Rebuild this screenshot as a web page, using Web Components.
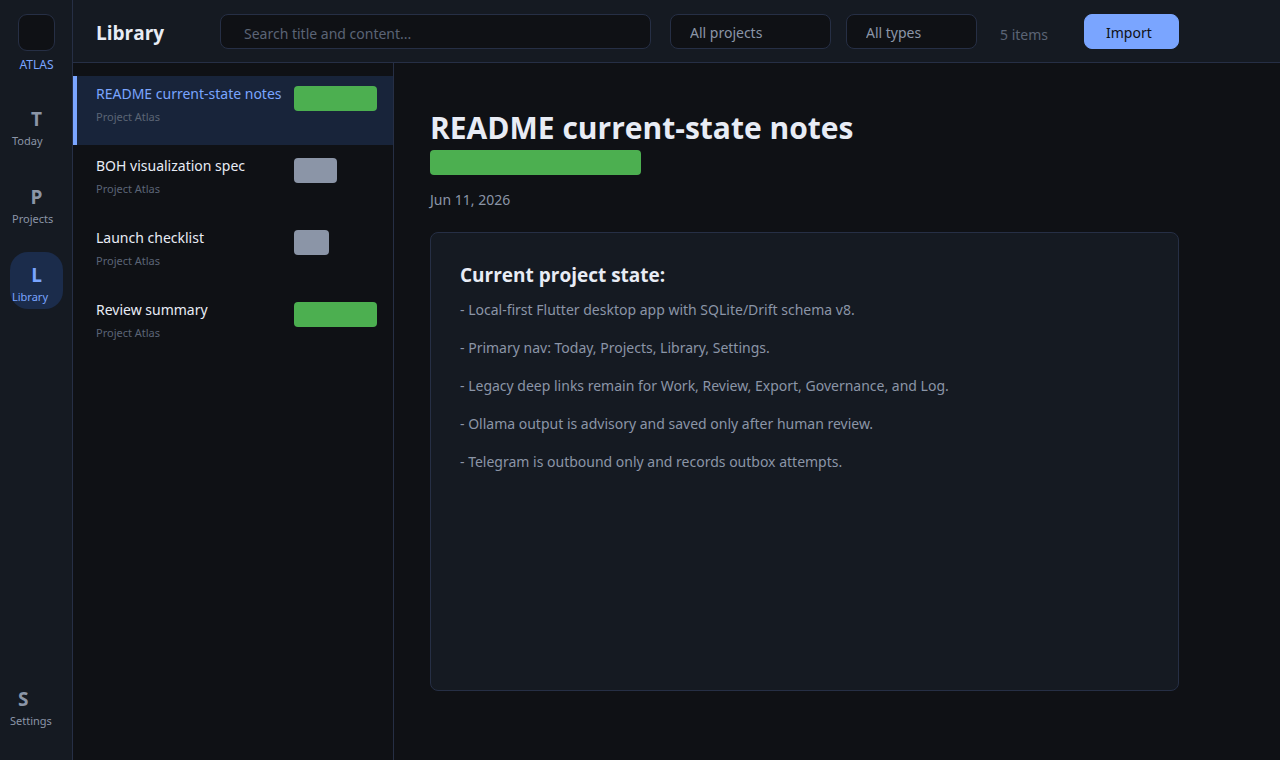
<!DOCTYPE html>
<html lang="en">
<head>
<meta charset="utf-8">
<meta name="viewport" content="width=device-width, initial-scale=1">
<title>Atlas – Library</title>
<style>
  :root {
    --bg: #0f1115;
    --panel: #151a22;
    --line: #262f45;
    --text: #e8ecf5;
    --soft: #8b95a7;
    --muted: #5b6475;
    --accent: #7aa5ff;
    --green: #4caf50;
    --selected: #18243a;
    --active: #1b2c4b;
    --heading-font: "Open Sans", "Noto Sans", sans-serif;
  }
  body {
    margin: 0;
    background: var(--bg);
    color: var(--text);
    font: 14px/20px "Noto Sans", "Open Sans", sans-serif;
  }
</style>
</head>
<body>
<atlas-app>
  <atlas-sidebar slot="nav">
    <nav-item letter="T" label="Today"></nav-item>
    <nav-item letter="P" label="Projects"></nav-item>
    <nav-item letter="L" label="Library" active></nav-item>
    <nav-item slot="end" letter="S" label="Settings" compact></nav-item>
  </atlas-sidebar>
  <library-toolbar slot="toolbar">Library</library-toolbar>
  <document-list slot="list">
    <document-row tag="document" selected>README current-state notes</document-row>
    <document-row tag="spec">BOH visualization spec</document-row>
    <document-row tag="list">Launch checklist</document-row>
    <document-row tag="document">Review summary</document-row>
  </document-list>
  <document-view slot="detail">
    <span slot="title">README current-state notes</span>
    <span slot="date">Jun 11, 2026</span>
    <span slot="heading">Current project state:</span>
    <note-line>Local-first Flutter desktop app with SQLite/Drift schema v8.</note-line>
    <note-line>Primary nav: Today, Projects, Library, Settings.</note-line>
    <note-line>Legacy deep links remain for Work, Review, Export, Governance, and Log.</note-line>
    <note-line>Ollama output is advisory and saved only after human review.</note-line>
    <note-line>Telegram is outbound only and records outbox attempts.</note-line>
  </document-view>
</atlas-app>

<script>
  const define = (name, render) => {
    customElements.define(name, class extends HTMLElement {
      constructor() {
        super();
        this.attachShadow({ mode: "open" });
      }
      connectedCallback() {
        this.shadowRoot.innerHTML = render(this);
      }
    });
  };

  define("atlas-app", () => `
    <style>
      :host { display: grid; grid-template-columns: auto 1fr; min-height: 100vh; }
      .page { display: grid; grid-template-rows: auto 1fr; min-width: 0; }
      .content { display: grid; grid-template-columns: auto 1fr; }
    </style>
    <slot name="nav"></slot>
    <div class="page">
      <slot name="toolbar"></slot>
      <div class="content">
        <slot name="list"></slot>
        <slot name="detail"></slot>
      </div>
    </div>`);

  define("atlas-sidebar", () => `
    <style>
      :host {
        display: flex; flex-direction: column; box-sizing: border-box; width: 73px;
        padding: 14px 9px 27px 10px; background: var(--panel);
        border-right: 1px solid var(--line);
      }
      .brand { display: flex; flex-direction: column; align-items: center; gap: 6px; color: var(--accent); font-size: 12px; line-height: 16px; }
      .mark { box-sizing: border-box; width: 37px; height: 37px; border: 1px solid var(--line); border-radius: 9px; background: var(--bg); }
      nav { flex: 1; display: flex; flex-direction: column; gap: 21px; padding-top: 23px; }
      .end { margin-top: auto; }
    </style>
    <div class="brand"><div class="mark"></div>ATLAS</div>
    <nav><slot></slot><div class="end"><slot name="end"></slot></div></nav>`);

  define("nav-item", (el) => `
    <style>
      :host { display: block; }
      a {
        display: flex; flex-direction: column; box-sizing: border-box; height: 57px;
        padding: 11px 2px 3px; border-radius: 18px; color: var(--soft); text-decoration: none;
      }
      b { align-self: center; margin-bottom: 2px; font: bold 19px/24px var(--heading-font); }
      span { font-size: 11px; line-height: 16px; white-space: nowrap; }
      :host([active]) a { background: var(--active); color: var(--accent); }
      :host([compact]) a { padding-left: 0; }
      :host([compact]) b { align-self: flex-start; padding-left: 8px; }
    </style>
    <a href="#${el.getAttribute("label").toLowerCase()}"><b>${el.getAttribute("letter")}</b><span>${el.getAttribute("label")}</span></a>`);

  define("library-toolbar", () => `
    <style>
      :host {
        display: flex; align-items: center; box-sizing: border-box; height: 63px;
        padding: 0 101px 0 23px; background: var(--panel); border-bottom: 1px solid var(--line);
      }
      h1 { width: 124px; margin: 0; padding-top: 4px; font: bold 19px/24px var(--heading-font); }
      input, select, button {
        box-sizing: border-box; height: 35px; margin: 0; font: inherit;
        border: 1px solid var(--line); border-radius: 8px; background: var(--bg);
      }
      input { flex: 1; min-width: 0; padding: 4px 23px 0; color: var(--soft); }
      input::placeholder { color: var(--muted); opacity: 1; }
      select { appearance: none; padding: 4px 19px 0; color: var(--soft); }
      .projects { width: 161px; margin-left: 19px; }
      .types { width: 131px; margin-left: 15px; }
      output { width: 84px; margin-left: 23px; padding-top: 7px; color: var(--muted); }
      button { width: 95px; padding: 4px 0 0 21px; text-align: left; color: var(--bg); background: var(--accent); border-color: var(--accent); }
    </style>
    <h1><slot></slot></h1>
    <input type="search" placeholder="Search title and content..." aria-label="Search title and content">
    <select class="projects" aria-label="Project"><option>All projects</option></select>
    <select class="types" aria-label="Type"><option>All types</option></select>
    <output>5 items</output>
    <button type="button">Import</button>`);

  define("document-list", () => `
    <style>
      :host {
        display: flex; flex-direction: column; gap: 3px; box-sizing: border-box;
        width: 321px; padding-top: 13px; border-right: 1px solid var(--line);
      }
    </style>
    <slot></slot>`);

  define("color-tag", () => `
    <style>
      :host { display: block; width: 83px; height: 25px; border-radius: 4px; background: var(--green); }
      :host([kind="spec"]) { width: 43px; background: var(--soft); }
      :host([kind="list"]) { width: 35px; background: var(--soft); }
      :host([kind="wide"]) { width: 211px; }
    </style>`);

  define("document-row", (el) => `
    <style>
      :host { display: block; }
      a {
        display: grid; grid-template-columns: 187px auto; justify-content: start; column-gap: 11px;
        box-sizing: border-box; height: 69px; padding: 8px 0 0 19px;
        border-left: 4px solid transparent; color: var(--text); text-decoration: none;
      }
      strong { display: block; font-weight: 400; white-space: nowrap; }
      small { display: block; margin-top: 5px; font-size: 11px; line-height: 16px; color: var(--muted); }
      color-tag { margin-top: 2px; }
      :host([selected]) a { background: var(--selected); border-color: var(--accent); color: var(--accent); }
    </style>
    <a href="#document">
      <div><strong><slot></slot></strong><small>Project Atlas</small></div>
      <color-tag kind="${el.getAttribute("tag")}"></color-tag>
    </a>`);

  define("document-view", () => `
    <style>
      :host { display: flex; flex-direction: column; min-width: 0; padding: 42px 101px 69px 36px; }
      h2 { margin: 0; font: bold 30px/45px var(--heading-font); }
      time { display: block; margin: 15px 0 22px; color: var(--soft); }
      article {
        flex: 1; box-sizing: border-box; padding: 30px 29px; border: 1px solid var(--line);
        border-radius: 8px; background: var(--panel);
      }
      h3 { margin: 0 0 13px; font: bold 19px/24px var(--heading-font); }
      .notes { display: grid; gap: 18px; }
    </style>
    <h2><slot name="title"></slot></h2>
    <color-tag kind="wide"></color-tag>
    <time datetime="2026-06-11"><slot name="date"></slot></time>
    <article>
      <h3><slot name="heading"></slot></h3>
      <div class="notes"><slot></slot></div>
    </article>`);

  define("note-line", () => `
    <style>:host { display: block; color: var(--soft); }</style>
    - <slot></slot>`);
</script>
</body>
</html>
